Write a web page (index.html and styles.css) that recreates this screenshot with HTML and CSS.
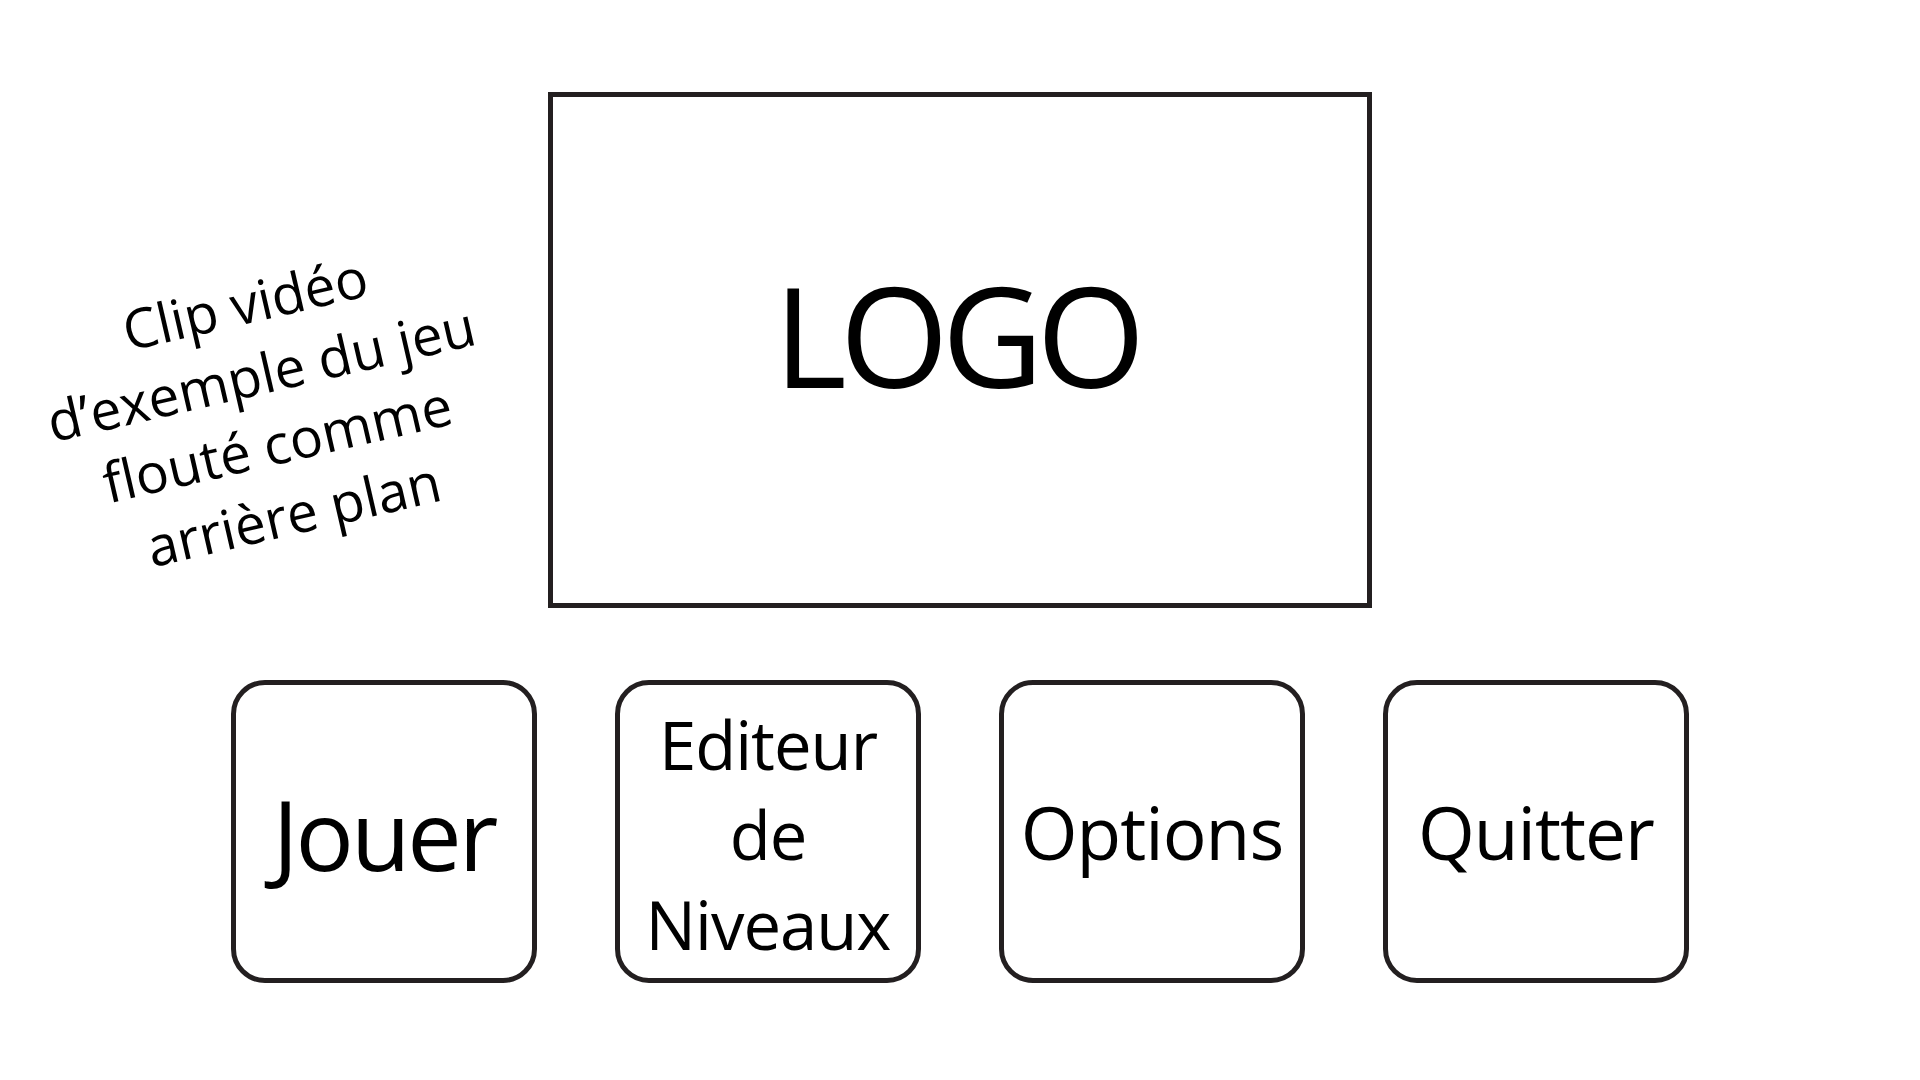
FILE: index.html
```html
<!DOCTYPE html>
<html lang="fr">
<head>
<meta charset="utf-8">
<title>Menu principal</title>
<link rel="stylesheet" href="styles.css">
</head>
<body>
<div class="screen">
  <div class="bg-note">Clip vidéo<br>d’exemple du jeu<br>flouté comme<br>arrière plan</div>
  <div class="logo-box"><span class="logo-text">LOGO</span></div>
  <div class="menu">
    <div class="btn btn-big">Jouer</div>
    <div class="btn btn-small">Editeur<br>de<br>Niveaux</div>
    <div class="btn btn-mid">Options</div>
    <div class="btn btn-mid">Quitter</div>
  </div>
</div>
</body>
</html>
```
FILE: styles.css
```css
html, body {
  margin: 0;
  padding: 0;
  background: #ffffff;
}
.screen {
  position: relative;
  width: 1920px;
  height: 1080px;
  display: flex;
  flex-direction: column;
  align-items: center;
  font-family: "Open Sans", "Noto Sans", sans-serif;
  color: #000000;
  overflow: hidden;
}
.logo-box {
  margin-top: 92px;
  width: 824px;
  height: 516px;
  box-sizing: border-box;
  border: 5px solid #231f20;
  display: flex;
  align-items: center;
  justify-content: center;
  padding-bottom: 32px;
}
.logo-text {
  font-size: 140px;
  line-height: 1;
  letter-spacing: -7px;
  margin-right: 8px;
}
.menu {
  margin-top: 72px;
  display: flex;
  gap: 78px;
}
.btn {
  width: 306px;
  height: 303px;
  box-sizing: border-box;
  border: 5px solid #231f20;
  border-radius: 34px;
  display: flex;
  align-items: center;
  justify-content: center;
  text-align: center;
}
.btn-big {
  font-size: 97px;
  line-height: 1;
  letter-spacing: -3px;
  padding-top: 4px;
}
.btn-mid {
  font-size: 73px;
  line-height: 1;
  letter-spacing: -1px;
}
.btn-small {
  font-size: 67px;
  line-height: 90px;
  letter-spacing: -1px;
  padding-top: 4px;
}
.bg-note {
  position: absolute;
  left: 269px;
  top: 408px;
  transform: translate(-50%, -50%) rotate(-13deg);
  font-size: 55px;
  line-height: 72px;
  text-align: center;
  white-space: nowrap;
}
```
